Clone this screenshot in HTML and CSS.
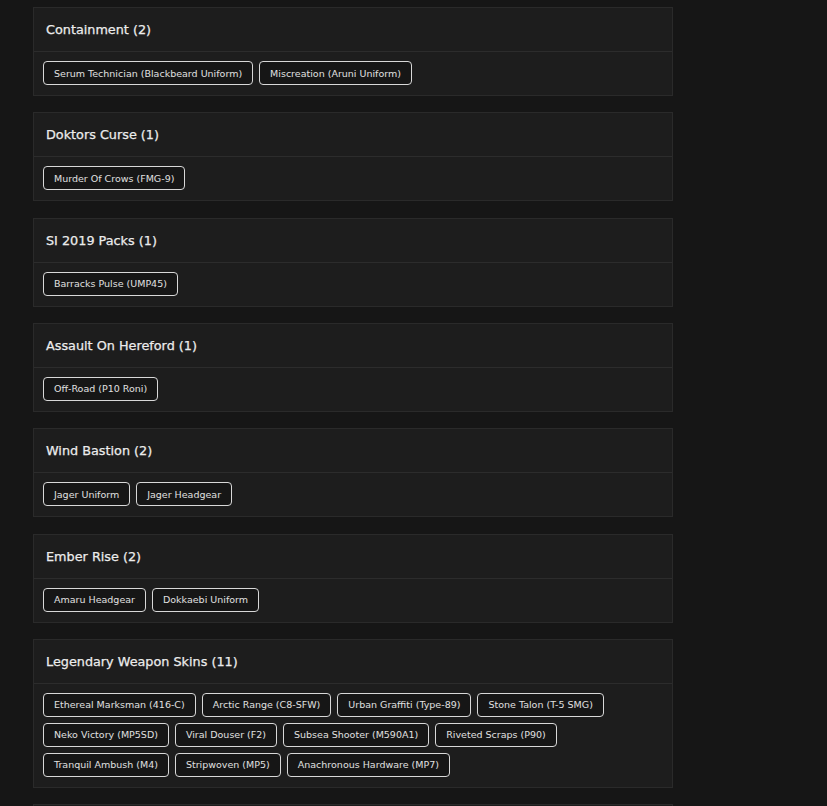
FILE: index.html
```html
<!DOCTYPE html>
<html>
<head>
<meta charset="utf-8">
<link rel="stylesheet" href="styles.css">
</head>
<body>
<main class="list">
  <section class="card">
    <h3 class="card-title">Containment (2)</h3>
    <div class="tags">
      <span class="tag">Serum Technician (Blackbeard Uniform)</span>
      <span class="tag">Miscreation (Aruni Uniform)</span>
    </div>
  </section>
  <section class="card">
    <h3 class="card-title">Doktors Curse (1)</h3>
    <div class="tags">
      <span class="tag">Murder Of Crows (FMG-9)</span>
    </div>
  </section>
  <section class="card">
    <h3 class="card-title">SI 2019 Packs (1)</h3>
    <div class="tags">
      <span class="tag">Barracks Pulse (UMP45)</span>
    </div>
  </section>
  <section class="card">
    <h3 class="card-title">Assault On Hereford (1)</h3>
    <div class="tags">
      <span class="tag">Off-Road (P10 Roni)</span>
    </div>
  </section>
  <section class="card">
    <h3 class="card-title">Wind Bastion (2)</h3>
    <div class="tags">
      <span class="tag">Jager Uniform</span>
      <span class="tag">Jager Headgear</span>
    </div>
  </section>
  <section class="card">
    <h3 class="card-title">Ember Rise (2)</h3>
    <div class="tags">
      <span class="tag">Amaru Headgear</span>
      <span class="tag">Dokkaebi Uniform</span>
    </div>
  </section>
  <section class="card">
    <h3 class="card-title">Legendary Weapon Skins (11)</h3>
    <div class="tags">
      <span class="tag">Ethereal Marksman (416-C)</span>
      <span class="tag">Arctic Range (C8-SFW)</span>
      <span class="tag">Urban Graffiti (Type-89)</span>
      <span class="tag">Stone Talon (T-5 SMG)</span>
      <span class="tag">Neko Victory (MP5SD)</span>
      <span class="tag">Viral Douser (F2)</span>
      <span class="tag">Subsea Shooter (M590A1)</span>
      <span class="tag">Riveted Scraps (P90)</span>
      <span class="tag">Tranquil Ambush (M4)</span>
      <span class="tag">Stripwoven (MP5)</span>
      <span class="tag">Anachronous Hardware (MP7)</span>
    </div>
  </section>
  <section class="card card-last"></section>
</main>
</body>
</html>
```
FILE: styles.css
```css
html, body {
  margin: 0;
  padding: 0;
  background: #161616;
  height: 100%;
  overflow: hidden;
}
body {
  font-family: "DejaVu Sans", sans-serif;
  color: #e6e6e6;
}
.list {
  width: 640px;
  margin-left: 33px;
  padding-top: 7px;
  display: flex;
  flex-direction: column;
  gap: 16.33px;
}
.card {
  background: #1d1d1d;
  border: 1px solid #2a2a2a;
  box-sizing: border-box;
}
.card-last {
  height: 60px;
}
.card-title {
  margin: 0;
  height: 44px;
  box-sizing: border-box;
  padding: 0 12px;
  display: flex;
  align-items: center;
  font-size: 12.8px;
  font-weight: 500;
  -webkit-text-stroke: 0.25px #ececec;
  color: #ececec;
  border-bottom: 1px solid #2c2c2c;
}
.tags {
  display: flex;
  flex-wrap: wrap;
  gap: 6px;
  padding: 9px 9px 10px;
}
.tag {
  height: 24px;
  box-sizing: border-box;
  display: inline-flex;
  align-items: center;
  padding: 0 10px;
  border: 1px solid #d8d8d8;
  border-radius: 4px;
  background: #161616;
  font-size: 9.5px;
  color: #e0e0e0;
  white-space: nowrap;
}
```
